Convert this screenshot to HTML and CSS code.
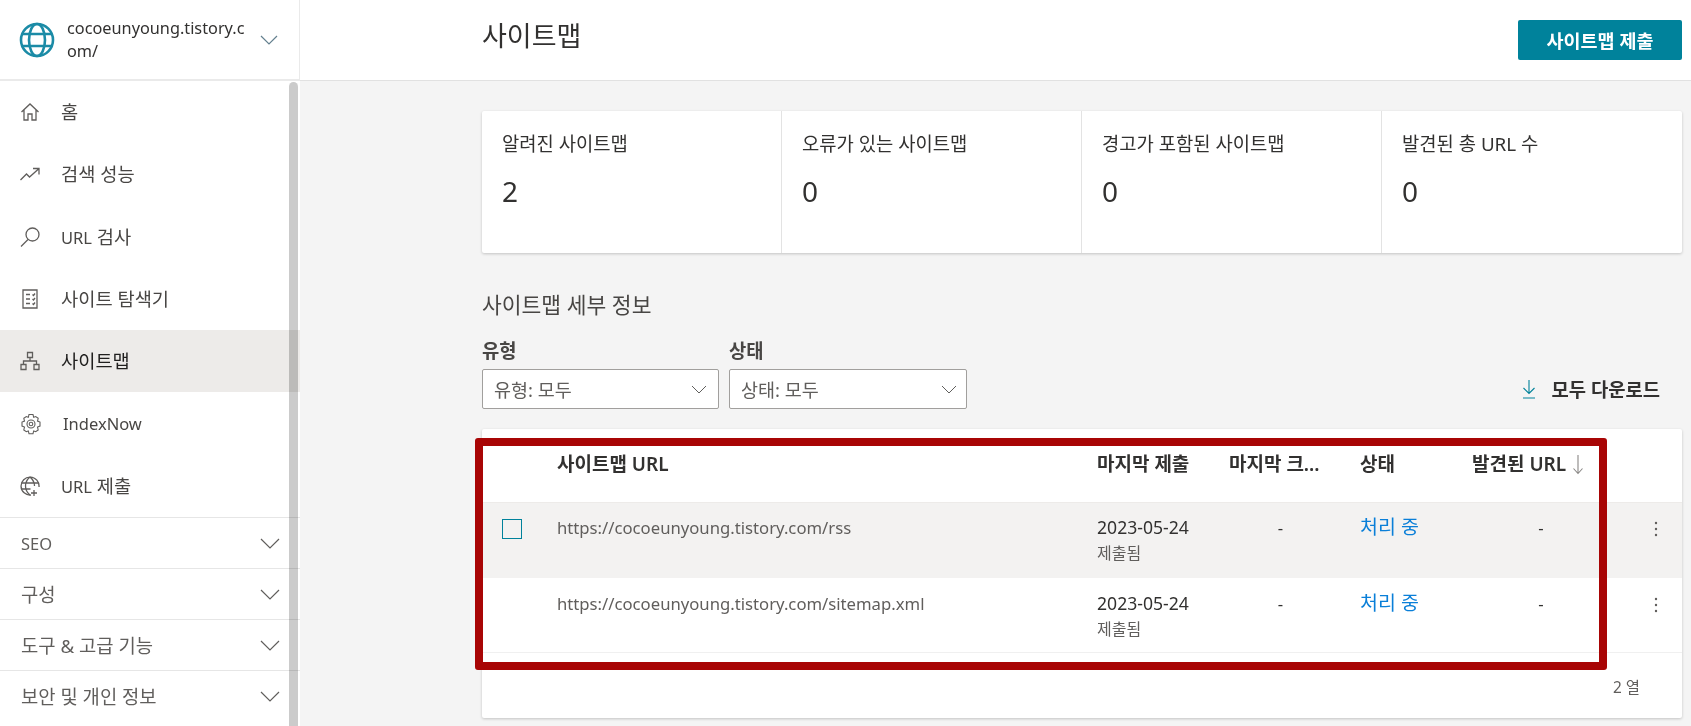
FILE: index.html
```html
<!DOCTYPE html>
<html lang="ko">
<head>
  <meta charset="UTF-8">
  <title>사이트맵</title>
  <link rel="stylesheet" href="styles.css">
</head>
<body>

  <div class="app">
    <aside class="sidebar">
      <div class="site-picker">
        <svg class="site-globe" viewBox="0 0 36 36">
          <circle cx="18" cy="18" r="16"/>
          <ellipse cx="18" cy="18" rx="8" ry="16"/>
          <path d="M3 12h30M3 24h30"/>
        </svg>
        <div class="site-name">cocoeunyoung.tistory.com/</div>
        <svg class="chev chev-site" viewBox="0 0 18 10"><path d="M1 1l8 8 8-8"/></svg>
      </div>

      <div class="scroll-thumb"></div>

      <nav class="nav-list">
        <a class="nav-item">
          <svg class="nav-icon" viewBox="0 0 20 20"><path d="M1.500 10L10 2l8.500 8M4 8v10h4v-6h4v6h4V8"/></svg>
          <span>홈</span>
        </a>
        <a class="nav-item">
          <svg class="nav-icon" viewBox="0 0 20 20"><path d="M0.500 16l6-6 3 3 9-8M13 4.500h6v6"/></svg>
          <span>검색 성능</span>
        </a>
        <a class="nav-item">
          <svg class="nav-icon" viewBox="0 0 20 20"><circle cx="12.500" cy="7.500" r="6.500"/><path d="M8 12.500L1 19.500"/></svg>
          <span><span class="lat">URL</span> 검사</span>
        </a>
        <a class="nav-item">
          <svg class="nav-icon" viewBox="0 0 20 20"><path d="M3 1h14v18H3zM6 5.500h4M6 10h4M6 14.500h4M12.500 5.500l1 1 1.500-2M12.500 10l1 1 1.500-2M12.500 14.500l1 1 1.500-2"/></svg>
          <span>사이트 탐색기</span>
        </a>
        <a class="nav-item active">
          <svg class="nav-icon" viewBox="0 0 20 20"><path d="M7.500 1.500h5v5h-5zM1 13.500h5v5H1zM14 13.500h5v5h-5zM10 6.500v3.500M3.500 13.500V10h13v3.500"/></svg>
          <span>사이트맵</span>
        </a>
        <a class="nav-item nav-item-latin">
          <svg class="nav-icon nav-icon-gear" viewBox="0 0 22 22"><path d="M9 1.500h4l.7 2.800 2-.8 2.500 1.800-.7 2.800 2.500 1v4l-2.500 1 .7 2.800-2.500 1.800-2-.8-.7 2.800H9l-.7-2.800-2 .8-2.500-1.800.7-2.800-2.500-1v-4l2.500-1-.7-2.800L6.300 3.500l2 .8z"/><circle cx="11" cy="11" r="4"/><circle cx="11" cy="11" r="1.800"/></svg>
          <span class="lat">IndexNow</span>
        </a>
        <a class="nav-item">
          <svg class="nav-icon" viewBox="0 0 20 20"><path d="M11 19A9 9 0 1 1 19 11"/><path d="M10 1c-6 5-6 13 0 18M10 1c3.500 3 4.500 6 4.500 9M1.500 7h17M1.500 13h9M14 14v6M11 17h6"/></svg>
          <span><span class="lat">URL</span> 제출</span>
        </a>
      </nav>

      <div class="nav-group"><span class="lat">SEO</span><svg class="chev" viewBox="0 0 20 11"><path d="M1 1l9 9 9-9"/></svg></div>
      <div class="nav-group"><span>구성</span><svg class="chev" viewBox="0 0 20 11"><path d="M1 1l9 9 9-9"/></svg></div>
      <div class="nav-group"><span>도구 &amp; 고급 기능</span><svg class="chev" viewBox="0 0 20 11"><path d="M1 1l9 9 9-9"/></svg></div>
      <div class="nav-group"><span>보안 및 개인 정보</span><svg class="chev" viewBox="0 0 20 11"><path d="M1 1l9 9 9-9"/></svg></div>
    </aside>

    <main class="main">
      <header class="top-bar">
        <h1 class="page-title">사이트맵</h1>
        <button class="btn-submit">사이트맵 제출</button>
      </header>

      <div class="content">
        <section class="summary card">
          <div class="summary-cell">
            <div class="summary-label">알려진 사이트맵</div>
            <div class="summary-value">2</div>
          </div>
          <div class="summary-cell">
            <div class="summary-label">오류가 있는 사이트맵</div>
            <div class="summary-value">0</div>
          </div>
          <div class="summary-cell">
            <div class="summary-label">경고가 포함된 사이트맵</div>
            <div class="summary-value">0</div>
          </div>
          <div class="summary-cell">
            <div class="summary-label">발견된 총 URL 수</div>
            <div class="summary-value">0</div>
          </div>
        </section>

        <h2 class="section-title">사이트맵 세부 정보</h2>

        <div class="filter-row">
          <div class="filter">
            <label class="filter-label">유형</label>
            <div class="select"><span>유형: 모두</span><svg class="chev chev-small" viewBox="0 0 16 9"><path d="M1 1l7 7 7-7"/></svg></div>
          </div>
          <div class="filter">
            <label class="filter-label">상태</label>
            <div class="select"><span>상태: 모두</span><svg class="chev chev-small" viewBox="0 0 16 9"><path d="M1 1l7 7 7-7"/></svg></div>
          </div>
          <a class="download">
            <svg class="download-icon" viewBox="0 0 14 20"><path d="M7 1v13M1.500 9L7 14.500 12.500 9M1 19h12"/></svg>
            <span>모두 다운로드</span>
          </a>
        </div>

        <section class="table-card card">
          <div class="row row-head">
            <div></div>
            <div>사이트맵 URL</div>
            <div>마지막 제출</div>
            <div>마지막 크...</div>
            <div>상태</div>
            <div class="head-sorted">발견된 URL <svg class="sort-arrow" viewBox="0 0 10 20"><path d="M5 0v18M.5 13.500L5 18.500l4.500-5"/></svg></div>
            <div></div>
          </div>

          <div class="row row-selected">
            <div><span class="checkbox"></span></div>
            <div class="cell-url">https://cocoeunyoung.tistory.com/rss</div>
            <div><div class="cell-date">2023-05-24</div><div class="cell-sub">제출됨</div></div>
            <div class="cell-dash">-</div>
            <div class="cell-status">처리 중</div>
            <div class="cell-dash">-</div>
            <div class="cell-more"><svg class="kebab" viewBox="0 0 4 16"><circle cx="2" cy="2" r="1.200"/><circle cx="2" cy="8" r="1.200"/><circle cx="2" cy="14" r="1.200"/></svg></div>
          </div>

          <div class="row row-last">
            <div></div>
            <div class="cell-url">https://cocoeunyoung.tistory.com/sitemap.xml</div>
            <div><div class="cell-date">2023-05-24</div><div class="cell-sub">제출됨</div></div>
            <div class="cell-dash">-</div>
            <div class="cell-status">처리 중</div>
            <div class="cell-dash">-</div>
            <div class="cell-more"><svg class="kebab" viewBox="0 0 4 16"><circle cx="2" cy="2" r="1.200"/><circle cx="2" cy="8" r="1.200"/><circle cx="2" cy="14" r="1.200"/></svg></div>
          </div>

          <div class="table-foot">2 열</div>

          <div class="red-frame"></div>
        </section>
      </div>
    </main>
  </div>

</body>
</html>
```

FILE: styles.css
```css
* { box-sizing: border-box; }
html, body { margin: 0; height: 100%; overflow: hidden; }
body { font-family: "Noto Sans", "Noto Sans CJK KR", sans-serif; background-color: #f4f4f4; color: #323130; }
svg { fill: none; stroke: currentColor; }

.app { display: flex; height: 726px; }

/* sidebar */
.sidebar { width: 300px; flex: none; background-color: #fff; position: relative; color: #484644; }
.site-picker { height: 81px; display: flex; align-items: center; padding: 0 20px 0 19px; border-bottom: 2px solid #eaeaea; border-right: 1px solid #eaeaea; }
.site-globe { width: 36px; height: 36px; flex: none; stroke: #1b8ba6; stroke-width: 2.6; }
.site-name { width: 182px; margin-left: 12px; font-size: 16.300px; line-height: 23px; word-break: break-all; color: #323130; }
.chev { stroke: #605e5c; stroke-width: 1.2; }
.chev-site { width: 18px; height: 10px; margin-left: 11px; stroke: #64808f; }
.scroll-thumb { position: absolute; top: 82px; left: 289px; width: 9px; height: 644px; background-color: #cbcbcb; border-radius: 5px 5px 0 0; z-index: 2; mix-blend-mode: multiply; }

.lat { font-size: 16.500px; }
.nav-item { height: 62.300px; display: flex; align-items: center; padding: 0 0 0 20px; font-size: 18.700px; }
.nav-item > span { margin-top: -3px; }
.nav-item.active { background-color: #edebe9; color: #201f1e; }
.nav-item-latin > .lat { margin: 0 0 0 2px; }
.nav-icon { width: 20px; height: 20px; margin-right: 21px; stroke: #605e5c; stroke-width: 1.3; flex: none; }
.nav-icon-gear { width: 22px; height: 22px; margin-right: 19px; stroke-width: 1.1; }
.nav-group { height: 51px; display: flex; align-items: center; justify-content: space-between; padding: 0 20px 0 21px; border-top: 1px solid #e6e6e6; font-size: 18.800px; color: #605e5c; }
.nav-group .chev { width: 20px; height: 11px; }

/* main */
.main { flex: 1; min-width: 0; }
.top-bar { height: 81px; background-color: #fff; border-bottom: 1px solid #e1e1e1; display: flex; align-items: center; justify-content: space-between; padding: 0 9px 9px 182px; }
.page-title { margin: 1px 0 0; font-size: 27px; font-weight: 400; line-height: 36px; }
.btn-submit { width: 164px; height: 40px; margin-top: 9px; background-color: #00829b; color: #fff; border: none; border-radius: 2px; font-family: inherit; font-size: 18.500px; font-weight: 700; }

.content { width: 1200px; margin-left: 182px; padding-top: 30px; }
.card { background-color: #fff; border-radius: 2px; box-shadow: 0 1px 3px rgba(0,0,0,0.2); }

.summary { height: 142px; display: grid; grid-template-columns: repeat(4, 1fr); }
.summary-cell { padding: 21px 20px 0; border-right: 1px solid #e3e3e3; }
.summary-cell:last-child { border-right: none; }
.summary-label { font-size: 18.800px; line-height: 24px; }
.summary-value { margin-top: 16px; font-size: 28px; line-height: 38px; }

.section-title { margin: 39px 0 0; font-size: 21.500px; font-weight: 400; line-height: 26px; color: #484644; }

.filter-row { display: flex; gap: 10px; align-items: flex-end; margin-top: 22px; }
.filter { width: 237px; }
.filter + .filter { width: 238px; }
.filter + .filter .select { padding-right: 9px; }
.filter-label { display: block; font-size: 18.800px; font-weight: 600; line-height: 22px; color: #484644; }
.select { height: 40px; margin-top: 7px; padding: 0 11px; border: 1px solid #a19f9d; border-radius: 2px; background-color: #fff; display: flex; align-items: center; justify-content: space-between; font-size: 18.500px; color: #605e5c; }
.chev-small { width: 16px; height: 9px; stroke-width: 1; }

.download { margin-left: auto; margin-right: 22px; height: 40px; display: flex; align-items: center; gap: 15px; font-size: 18.800px; font-weight: 600; }
.download-icon { width: 14px; height: 20px; stroke: #00829b; stroke-width: 1.1; }

.table-card { height: 289px; margin-top: 20px; position: relative; }
.row { display: grid; grid-template-columns: 75px 540px 132px 131px 112px 150px 1fr; }
.row-head { height: 74px; padding-top: 23px; font-size: 19px; font-weight: 600; line-height: 24px; color: #323130; border-bottom: 1px solid #edebe9; }
.row-selected, .row-last { padding-top: 13px; font-size: 16.700px; color: #605e5c; }
.row-selected { height: 75px; background-color: #f3f2f1; }
.row-last { height: 75px; padding-top: 14px; border-bottom: 1px solid #f0f0f0; }
.head-sorted { white-space: nowrap; }
.sort-arrow { width: 10px; height: 20px; margin-left: 2px; vertical-align: -4px; stroke: #8a8886; stroke-width: 1.100; }

.checkbox { display: block; width: 20px; height: 20px; margin: 3px 0 0 20px; border: 1.500px solid #00829b; }
.cell-url, .cell-date { line-height: 23px; }
.cell-date { font-size: 17.600px; color: #323130; }
.cell-sub { margin-top: 4px; font-size: 16px; line-height: 20px; color: #605e5c; }
.cell-dash { padding-right: 28px; text-align: center; line-height: 23px; color: #323130; }
.row > .cell-dash:nth-child(6) { padding-right: 12px; }
.cell-status { font-size: 19.500px; color: #0a7fd8; line-height: 23px; margin-top: -1px; }
.cell-more { padding-left: 32px; padding-top: 5px; }
.kebab { display: block; width: 4px; height: 16px; fill: #605e5c; stroke: none; }
.table-foot { padding: 25px 42px 0 0; text-align: right; font-size: 15.400px; line-height: 20px; color: #605e5c; }

.red-frame { position: absolute; top: 9px; left: -7px; width: 1132px; height: 232px; border: 8px solid #a80505; border-radius: 3px; pointer-events: none; }
```
